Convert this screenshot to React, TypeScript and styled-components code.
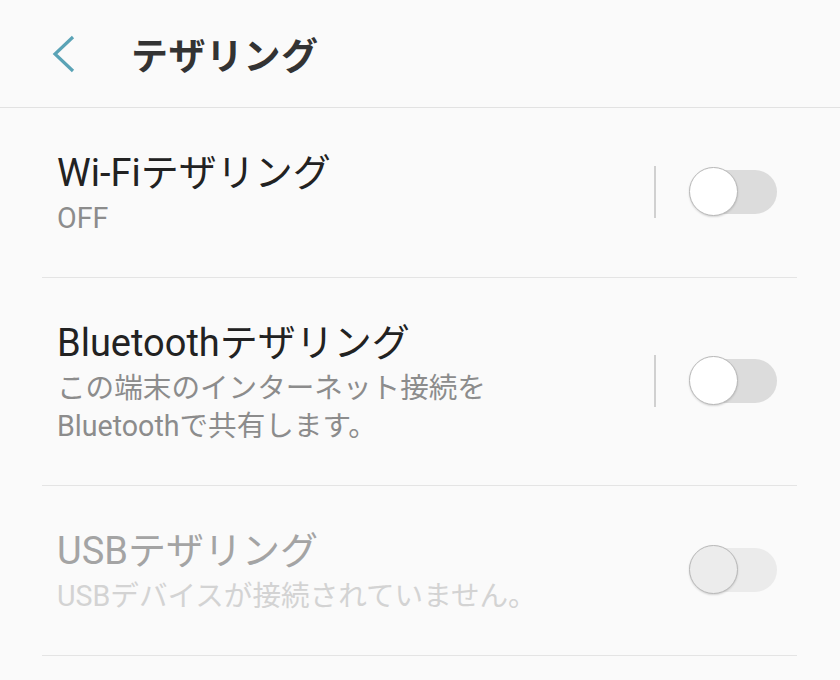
import { createGlobalStyle } from "styled-components";
import styled from "styled-components";

const GlobalStyle = createGlobalStyle`
  html, body {
    margin: 0;
    padding: 0;
    background: #fafafa;
  }
  body {
    font-family: Roboto, "Noto Sans CJK JP", sans-serif;
  }
`;

const Page = styled.div`
  width: 840px;
  min-height: 680px;
  background: #fafafa;
`;

const Header = styled.header`
  height: 107px;
  display: flex;
  align-items: center;
  border-bottom: 1px solid #e2e2e2;
`;

const BackButton = styled.button`
  width: 70px;
  height: 60px;
  margin-left: 51px;
  padding: 0;
  border: none;
  background: none;
  display: flex;
  align-items: center;
  justify-content: flex-start;
  cursor: pointer;
`;

const HeaderTitle = styled.h1`
  margin: 0 0 0 10px;
  font-size: 37px;
  font-weight: 700;
  color: #333;
  letter-spacing: 0.5px;
`;

const List = styled.ul`
  list-style: none;
  margin: 0 43px 0 42px;
  padding: 0;
`;

const Row = styled.li`
  display: flex;
  align-items: center;
  padding: 39px 20px 40px 15px;
  border-bottom: 1px solid #e4e4e4;
`;

const Texts = styled.div`
  flex: 1;
`;

const Title = styled.div<{ $disabled?: boolean }>`
  font-size: 38px;
  line-height: 52px;
  color: ${(p) => (p.$disabled ? "#a4a4a4" : "#222")};
`;

const Sub = styled.div<{ $disabled?: boolean }>`
  font-size: 28.6px;
  line-height: 38px;
  color: ${(p) => (p.$disabled ? "#d3d3d3" : "#8c8c8c")};
`;

const Separator = styled.div<{ $hidden?: boolean }>`
  width: 2px;
  height: 52px;
  background: ${(p) => (p.$hidden ? "transparent" : "#d0d0d0")};
  margin-right: 33px;
`;

const Switch = styled.div`
  position: relative;
  width: 88px;
  height: 50px;
`;

const Track = styled.div<{ $disabled?: boolean }>`
  position: absolute;
  left: 6px;
  right: 0;
  top: 3px;
  bottom: 3px;
  border-radius: 22px;
  background: ${(p) => (p.$disabled ? "#ebebeb" : "#dcdcdc")};
`;

const Thumb = styled.div<{ $disabled?: boolean }>`
  position: absolute;
  left: 0;
  top: 0;
  width: 47px;
  height: 47px;
  border-radius: 50%;
  background: ${(p) => (p.$disabled ? "#ececec" : "#fff")};
  border: 1.5px solid #b8b8b8;
  box-shadow: 0 1px 2px rgba(0, 0, 0, 0.15);
`;

interface ItemProps {
  title: string;
  sub: string[];
  disabled?: boolean;
}

const Item = ({ title, sub, disabled }: ItemProps) => (
  <Row>
    <Texts>
      <Title $disabled={disabled}>{title}</Title>
      {sub.map((s) => (
        <Sub key={s} $disabled={disabled}>
          {s}
        </Sub>
      ))}
    </Texts>
    <Separator $hidden={disabled} />
    <Switch>
      <Track $disabled={disabled} />
      <Thumb $disabled={disabled} />
    </Switch>
  </Row>
);

const App = () => {
  return (
    <>
      <GlobalStyle />
      <Page>
        <Header>
          <BackButton aria-label="戻る">
            <svg width="26" height="40" viewBox="0 0 26 40">
              <polyline
                points="22,3 4,20 22,37"
                fill="none"
                stroke="#5aa3b6"
                strokeWidth="3.2"
              />
            </svg>
          </BackButton>
          <HeaderTitle>テザリング</HeaderTitle>
        </Header>
        <List>
          <Item title="Wi-Fiテザリング" sub={["OFF"]} />
          <Item
            title="Bluetoothテザリング"
            sub={["この端末のインターネット接続を", "Bluetoothで共有します。"]}
          />
          <Item
            title="USBテザリング"
            sub={["USBデバイスが接続されていません。"]}
            disabled
          />
        </List>
      </Page>
    </>
  );
};

export default App;
